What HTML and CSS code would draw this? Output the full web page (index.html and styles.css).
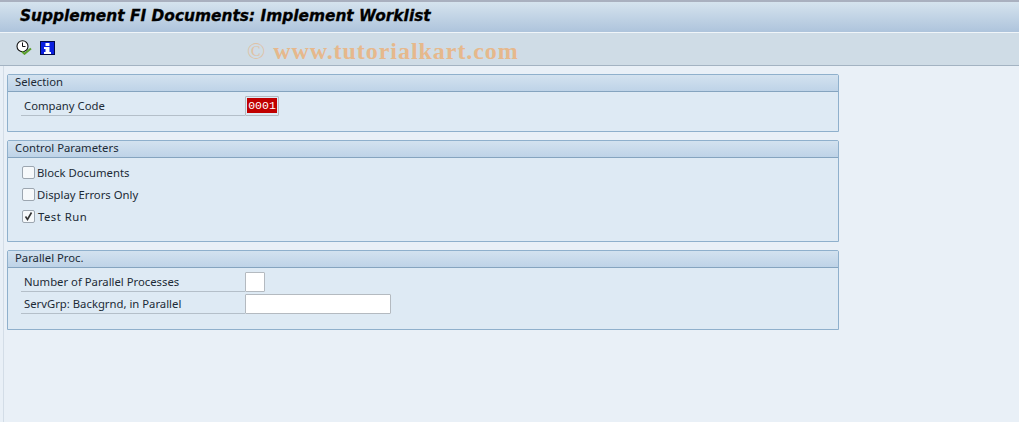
FILE: index.html
```html
<!DOCTYPE html>
<html lang="en">
<head>
    <meta charset="UTF-8">
    <title>Supplement FI Documents: Implement Worklist</title>
    <link rel="stylesheet" href="styles.css">
</head>
<body>

<div class="title-bar">
    <h1>Supplement FI Documents: Implement Worklist</h1>
</div>

<div class="toolbar">
    <svg class="tool-icon" width="16" height="15" viewBox="0 0 16 15">
        <circle cx="6.5" cy="6.2" r="5.5" fill="#fff" stroke="#111" stroke-width="1.1"/>
        <path d="M6.5 2.5v4h3" fill="none" stroke="#111" stroke-width="1"/>
        <path d="M6 11.5l2.5 2.3 6.5-5.3" fill="none" stroke="#5aa02c" stroke-width="2"/>
    </svg>
    <svg class="tool-icon" width="15" height="14" viewBox="0 0 15 14">
        <rect x="0.5" y="0.5" width="14" height="13" fill="#0a1fe0" stroke="#00084a"/>
        <rect x="5.5" y="2" width="4" height="3" fill="#fff"/>
        <path d="M4 6h5.5v5h1.5v2h-7v-2h1.5v-3h-1.5z" fill="#fff"/>
    </svg>
</div>

<div class="watermark"><span class="copy">©</span> www.tutorialkart.com</div>

<div class="content">
    <section class="group group-selection">
        <h2>Selection</h2>
        <div class="group-body">
            <div class="row">
                <span class="label">Company Code</span>
                <span class="field field-error">0001</span>
            </div>
        </div>
    </section>

    <section class="group group-control">
        <h2>Control Parameters</h2>
        <div class="group-body checks">
            <div class="check-row"><span class="box"></span><span>Block Documents</span></div>
            <div class="check-row"><span class="box"></span><span>Display Errors Only</span></div>
            <div class="check-row"><span class="box checked">
                <svg width="11" height="11" viewBox="0 0 11 11"><path d="M2.5 5.5l2 3 4-7" fill="none" stroke="#333" stroke-width="1.6"/></svg>
            </span><span class="checked-text">Test Run</span></div>
        </div>
    </section>

    <section class="group group-parallel">
        <h2>Parallel Proc.</h2>
        <div class="group-body">
            <div class="row">
                <span class="label">Number of Parallel Processes</span>
                <span class="field field-short"></span>
            </div>
            <div class="row">
                <span class="label">ServGrp: Backgrnd, in Parallel</span>
                <span class="field field-long"></span>
            </div>
        </div>
    </section>
</div>

</body>
</html>
```

FILE: styles.css
```css
html, body {
    height: 100%;
}

body {
    margin: 0;
    overflow: hidden;
    position: relative;
    display: flex;
    flex-direction: column;
    background: #e9f0f7;
    font-family: "Noto Sans", sans-serif;
    font-size: 11.3px;
    color: #1c2a36;
}

.title-bar {
    height: 28px;
    flex: none;
    display: flex;
    align-items: center;
    padding-left: 20px;
    padding-bottom: 2px;
    border-top: 2px solid #a9b0bf;
    border-bottom: 1px solid #f0f5f9;
    background: linear-gradient(to bottom, #d5e3ee, #aec4dc);
}

h1 {
    margin: 0;
    font-family: "DejaVu Sans", sans-serif;
    font-size: 15.4px;
    font-weight: bold;
    font-style: italic;
    color: #000;
    -webkit-text-stroke: 0.3px #000;
}

.toolbar {
    height: 33px;
    flex: none;
    display: flex;
    align-items: center;
    gap: 8px;
    padding-left: 16px;
    padding-bottom: 3px;
    box-sizing: border-box;
    background: #cfdce6;
    border-bottom: 1px solid #a3b3c2;
}

.tool-icon {
    display: block;
}

.watermark {
    position: absolute;
    top: 38px;
    left: 247px;
    font-family: "Liberation Serif", serif;
    font-size: 24px;
    font-weight: bold;
    letter-spacing: 0.95px;
    color: #e6b88c;
    white-space: nowrap;
}

.copy {
    font-weight: normal;
    opacity: 0.7;
}

.content {
    flex: 1;
    padding: 8px 0 0 3px;
    margin-left: 3px;
    border-left: 1px solid #d3dde7;
    box-sizing: border-box;
}

.group {
    width: 832px;
    box-sizing: border-box;
    margin-bottom: 8px;
    background: #deeaf4;
    border: 1px solid #8fb0cc;
    border-top-left-radius: 2px;
    border-top-right-radius: 2px;
}

.group h2 {
    margin: 0;
    height: 16px;
    line-height: 14px;
    padding-left: 7px;
    font-size: 11.3px;
    font-weight: normal;
    background: linear-gradient(to bottom, #d3e2ef, #bed3e7);
    border-bottom: 1px solid #85a4bf;
}

.group-selection { height: 58px; }
.group-control { height: 102px; }
.group-parallel { height: 80px; }

.group-body {
    padding: 4px 0 0 13px;
}

.row {
    display: flex;
    height: 22px;
}

.label {
    width: 224px;
    height: 20px;
    line-height: 20px;
    padding-left: 3px;
    box-sizing: border-box;
    border-bottom: 1px solid #b4bfc9;
}

.field {
    height: 20px;
    box-sizing: border-box;
    background: #fff;
    border: 1px solid #b4bac0;
    border-radius: 1px;
}

.field-short { width: 20px; }
.field-long { width: 146px; }

.field-error {
    width: 34px;
    padding: 1px 1px 2px 1px;
    line-height: 15px;
    font-family: "Liberation Mono", monospace;
    font-size: 11.5px;
    text-align: center;
    color: #fff;
    background: #c00000;
    background-clip: content-box;
    overflow: hidden;
}

.checks {
    padding: 3px 0 0 14px;
}

.check-row {
    display: flex;
    align-items: center;
    gap: 2px;
    height: 22px;
}

.box {
    display: flex;
    align-items: center;
    justify-content: center;
    width: 11px;
    height: 11px;
    background: #f6f9fb;
    border: 1px solid #9ca6b0;
    border-radius: 2px;
}

.checked-text {
    margin-left: 1px;
    letter-spacing: 0.5px;
}
```
